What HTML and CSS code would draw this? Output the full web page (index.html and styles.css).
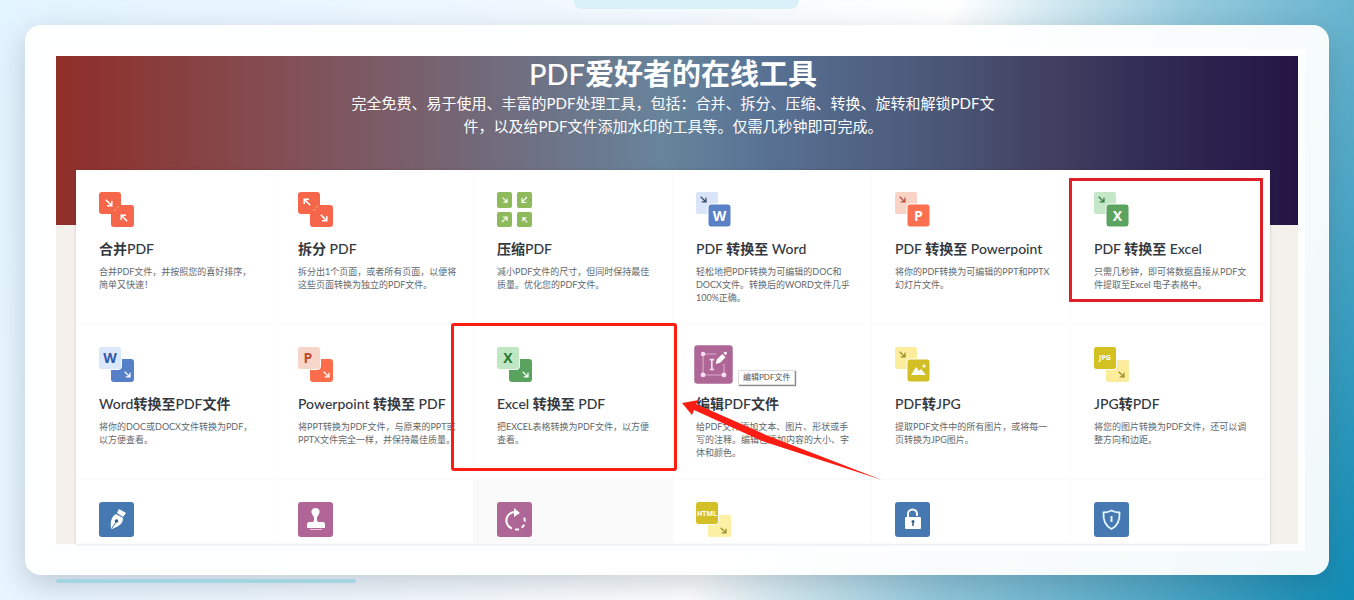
FILE: index.html
```html
<!DOCTYPE html>
<html lang="zh-CN">
<head>
  <meta charset="UTF-8" />
  <meta name="viewport" content="width=device-width, initial-scale=1.0" />
  <title>PDF爱好者的在线工具</title>
  <link rel="stylesheet" href="styles.css">
</head>
<body>
  <svg class="sprite" aria-hidden="true">
    <symbol id="arrow" viewBox="0 0 8 8"><path d="M.8.8l5.6 5.6M6.8 2v4.8H2" fill="none" stroke="currentColor" stroke-width="1.5"/></symbol>
    <symbol id="arrow-back" viewBox="0 0 8 8"><path d="M7.2 7.2L1.6 1.6M1.2 6V1.2H6" fill="none" stroke="currentColor" stroke-width="1.5"/></symbol>
  </svg>

  <div class="tab"></div>

  <main class="frame">
    <div class="shot">
      <header class="hero">
        <h1>PDF<b>爱好者的在线工具</b></h1>
        <p>完全免费、易于使用、丰富的PDF处理工具，包括：合并、拆分、压缩、转换、旋转和解锁PDF文<br>件，以及给PDF文件添加水印的工具等。仅需几秒钟即可完成。</p>
      </header>

      <div class="panel">
        <div class="tools">
          <a class="tool" href="#">
            <svg class="icon white" viewBox="0 0 35 35">
              <rect width="22" height="22" rx="3" fill="#f5664a"/><rect x="12" y="13" width="23" height="22" rx="3" fill="#f5664a"/>
              <path d="M15 19l5-5" stroke="#fbb36b" stroke-dasharray="3 1"/>
              <use href="#arrow" x="6" y="7" width="8" height="8"/><use href="#arrow-back" x="21" y="22" width="8" height="8"/>
            </svg>
            <h2><b>合并</b>PDF</h2>
            <p>合并PDF文件，并按照您的喜好排序，<br>简单又快速！</p>
          </a>
          <a class="tool" href="#">
            <svg class="icon white" viewBox="0 0 35 35">
              <rect width="22" height="22" rx="3" fill="#f5664a"/><rect x="12" y="13" width="23" height="22" rx="3" fill="#f5664a"/>
              <path d="M15 19l5-5" stroke="#fbb36b" stroke-dasharray="3 1"/>
              <use href="#arrow-back" x="5" y="6" width="8" height="8"/><use href="#arrow" x="22" y="22" width="8" height="8"/>
            </svg>
            <h2><b>拆分</b> PDF</h2>
            <p>拆分出1个页面，或者所有页面，以便将<br>这些页面转换为独立的PDF文件。</p>
          </a>
          <a class="tool" href="#">
            <svg class="icon white" viewBox="0 0 35 35">
              <g fill="#8fba5b"><rect width="15" height="16" rx="2"/><rect x="20" width="15" height="16" rx="2"/><rect y="20" width="15" height="15" rx="2"/><rect x="20" y="20" width="15" height="15" rx="2"/></g>
              <use href="#arrow" x="5" y="5" width="6" height="6"/><use href="#arrow-back" x="25" y="25" width="6" height="6"/>
              <path d="M30 5l-4.500 4.500M25 6v4.500h4.500M5 30l4.500-4.500M10 29v-4H6" fill="none" stroke="#fff" stroke-width="1.200"/>
            </svg>
            <h2><b>压缩</b>PDF</h2>
            <p>减小PDF文件的尺寸，但同时保持最佳<br>质量。优化您的PDF文件。</p>
          </a>
          <a class="tool" href="#">
            <svg class="icon navy" viewBox="0 0 35 35">
              <rect width="22" height="22" rx="2" fill="#d9e4f8"/><use href="#arrow" x="4" y="4" width="7" height="7"/>
              <rect x="12" y="12" width="23" height="23" rx="3" fill="#5a80c6" stroke="#fff"/><text x="23.500" y="29" fill="#fff">W</text>
            </svg>
            <h2>PDF <b>转换至</b> Word</h2>
            <p>轻松地把PDF转换为可编辑的DOC和<br>DOCX文件。转换后的WORD文件几乎<br>100%正确。</p>
          </a>
          <a class="tool" href="#">
            <svg class="icon rust" viewBox="0 0 35 35">
              <rect width="22" height="22" rx="2" fill="#f8d3c6"/><use href="#arrow" x="4" y="4" width="7" height="7"/>
              <rect x="12" y="12" width="23" height="23" rx="3" fill="#fb7150" stroke="#fff"/><text x="23.500" y="29" fill="#fff">P</text>
            </svg>
            <h2>PDF <b>转换至</b> Powerpoint</h2>
            <p>将你的PDF转换为可编辑的PPT和PPTX<br>幻灯片文件。</p>
          </a>
          <a class="tool" href="#">
            <svg class="icon green" viewBox="0 0 35 35">
              <rect width="22" height="22" rx="2" fill="#c3e7c7"/><use href="#arrow" x="4" y="4" width="7" height="7"/>
              <rect x="12" y="12" width="23" height="23" rx="3" fill="#5ba35f" stroke="#fff"/><text x="23.500" y="29" fill="#fff">X</text>
            </svg>
            <h2>PDF <b>转换至</b> Excel</h2>
            <p>只需几秒钟，即可将数据直接从PDF文<br>件提取至Excel 电子表格中。</p>
          </a>

          <a class="tool" href="#">
            <svg class="icon white" viewBox="0 0 35 35">
              <rect x="12" y="12" width="23" height="23" rx="3" fill="#5580c8"/><use href="#arrow" x="25" y="24" width="7" height="7"/>
              <rect x="-.5" y="-.5" width="23" height="23" rx="3" fill="#dbe7fb" stroke="#fff"/><text x="11" y="16" fill="#3158a5">W</text>
            </svg>
            <h2>Word<b>转换至</b>PDF<b>文件</b></h2>
            <p>将你的DOC或DOCX文件转换为PDF，<br>以方便查看。</p>
          </a>
          <a class="tool" href="#">
            <svg class="icon white" viewBox="0 0 35 35">
              <rect x="12" y="12" width="23" height="23" rx="3" fill="#fc6d4c"/><use href="#arrow" x="25" y="24" width="7" height="7"/>
              <rect x="-.5" y="-.5" width="23" height="23" rx="3" fill="#f6d6c9" stroke="#fff"/><text x="10" y="16" fill="#c04b30">P</text>
            </svg>
            <h2>Powerpoint <b>转换至</b> PDF</h2>
            <p>将PPT转换为PDF文件，与原来的PPT或<br>PPTX文件完全一样，并保持最佳质量。</p>
          </a>
          <a class="tool" href="#">
            <svg class="icon white" viewBox="0 0 35 35">
              <rect x="12" y="12" width="23" height="23" rx="3" fill="#59a35e"/><use href="#arrow" x="25" y="24" width="7" height="7"/>
              <rect x="-.5" y="-.5" width="23" height="23" rx="3" fill="#bfe7c4" stroke="#fff"/><text x="11" y="16" fill="#287b38">X</text>
            </svg>
            <h2>Excel <b>转换至</b> PDF</h2>
            <p>把EXCEL表格转换为PDF文件，以方便<br>查看。</p>
          </a>
          <a class="tool" href="#">
            <svg class="icon large" viewBox="0 0 35 35">
              <rect width="35" height="35" rx="3" fill="#ae6696"/>
              <path d="M8 9v18h19V17M8 8h12" fill="none" stroke="#dca7cb"/>
              <g fill="#fbdff3"><circle cx="8" cy="8" r="2"/><circle cx="8" cy="27" r="2.200"/><circle cx="27" cy="27" r="2.200"/></g>
              <path d="M14 13h4M14 22h4M16 13v9" stroke="#fbdff3" stroke-width="1.500"/>
              <path d="M19.500 17l1-4 5-5 3 3-5 5z M26.500 7l1.500-1c1.500-.5 2 1 1.500 2l-1 1z" fill="#fff"/>
            </svg>
            <h2><b>编辑</b>PDF<b>文件</b></h2>
            <p>给PDF文件添加文本、图片、形状或手<br>写的注释。编辑已添加内容的大小、字<br>体和颜色。</p>
          </a>
          <a class="tool" href="#">
            <svg class="icon olive" viewBox="0 0 35 35">
              <rect width="22" height="22" rx="2" fill="#fbed9c"/><use href="#arrow" x="4" y="4" width="7" height="7"/>
              <rect x="12" y="12" width="23" height="23" rx="3" fill="#d2bf25" stroke="#fff"/>
              <path d="M16 28l5-8 3 4 2-2 5 6z" fill="#fff"/><circle cx="29" cy="19" r="1.500" fill="#fff"/>
            </svg>
            <h2>PDF<b>转</b>JPG</h2>
            <p>提取PDF文件中的所有图片，或将每一<br>页转换为JPG图片。</p>
          </a>
          <a class="tool" href="#">
            <svg class="icon olive" viewBox="0 0 35 35">
              <rect x="12" y="13" width="23" height="22" rx="2" fill="#fbed9c"/><use href="#arrow" x="24" y="24" width="7" height="7"/>
              <rect x="-.5" y="-.5" width="23" height="23" rx="3" fill="#d3c021" stroke="#fff"/><text class="tiny" x="11" y="13" fill="#fff">JPG</text>
            </svg>
            <h2>JPG<b>转</b>PDF</h2>
            <p>将您的图片转换为PDF文件，还可以调<br>整方向和边距。</p>
          </a>

          <a class="tool short" href="#" aria-label="签名">
            <svg class="icon" viewBox="0 0 35 35">
              <rect width="35" height="35" rx="3" fill="#4678b2"/>
              <path d="M20 7l7 4-3 4-6-4z" fill="#fff"/><path d="M17 12l7 4c0 5-3 8-11 11l-1-1c-1-7 1-12 5-14z" fill="#fff"/>
              <path d="M13 26l4-6" stroke="#4678b2"/><circle cx="17.500" cy="19" r="1.800" fill="#355f86"/>
            </svg>
          </a>
          <a class="tool short" href="#" aria-label="水印">
            <svg class="icon" viewBox="0 0 35 35">
              <rect width="35" height="35" rx="3" fill="#b06596"/>
              <path d="M17.500 6c3 0 4.500 2 4 4.500S19 14 19 16s0 3 1 4h5c1 0 2 1 2 2v4H9v-4c0-1 1-2 2-2h4c1-1 1-2 1-4s-2-3-2.500-5.500S15 6 17.500 6z" fill="#fff"/>
              <path d="M12 27.500h12" stroke="#e7c8dd"/>
            </svg>
          </a>
          <a class="tool short active" href="#" aria-label="旋转">
            <svg class="icon" viewBox="0 0 35 35">
              <rect width="35" height="35" rx="3" fill="#ae6696"/>
              <path d="M18 10a8.500 8.500 0 0 0-3 16.500" fill="none" stroke="#fff" stroke-width="2"/>
              <path d="M18 27.500a8.500 8.500 0 0 0 8.500-13" fill="none" stroke="#fff" stroke-width="2" stroke-dasharray="4 3"/>
              <path d="M17 6l6 5-6 4z" fill="#fff"/>
            </svg>
          </a>
          <a class="tool short" href="#" aria-label="HTML转PDF">
            <svg class="icon olive" viewBox="0 0 35 35">
              <rect x="12" y="13" width="23" height="22" rx="2" fill="#fbf0a4"/><use href="#arrow" x="24" y="25" width="7" height="7"/>
              <rect x="-.5" y="-.5" width="23" height="23" rx="3" fill="#d3c029" stroke="#fff"/><text class="tiny" x="11" y="14" fill="#fff">HTML</text>
            </svg>
          </a>
          <a class="tool short" href="#" aria-label="解锁PDF">
            <svg class="icon" viewBox="0 0 35 35">
              <rect width="35" height="35" rx="3" fill="#4678b2"/>
              <path d="M13 16v-4a4.500 4.500 0 0 1 9 0v2" fill="none" stroke="#fff" stroke-width="2"/>
              <rect x="10" y="15" width="16" height="12" rx="1" fill="#fff"/><circle cx="18" cy="19.500" r="1.500" fill="#355f86"/><path d="M18 20v4" stroke="#355f86" stroke-width="1.500"/>
            </svg>
          </a>
          <a class="tool short" href="#" aria-label="保护PDF">
            <svg class="icon" viewBox="0 0 35 35">
              <rect width="35" height="35" rx="3" fill="#4678b2"/>
              <path d="M17.500 8.500c2.500 1.500 5 2 8 2 .5 7.500-1 13-8 16.500-7-3.500-8.500-9-8-16.500 3 0 5.500-.5 8-2z" fill="none" stroke="#e3f7ff" stroke-width="1.800"/>
              <path d="M17.500 14v6" stroke="#e3f7ff" stroke-width="2"/>
            </svg>
          </a>
        </div>

        <!-- marks drawn over the tool grid -->
        <span class="tooltip">编辑PDF文件</span>
        <div class="mark mark-top"></div>
        <div class="mark mark-middle"></div>
        <svg class="pointer" viewBox="0 0 201 82" aria-hidden="true">
          <path d="M0 3L17 0l-3 4 70 31 116 45L80 41 12 10l-2 5z" fill="#fb1d13"/>
        </svg>
      </div>
    </div>
  </main>

  <div class="underline"></div>
</body>
</html>
```
FILE: styles.css
```css
* {
  box-sizing: border-box;
}

body {
  position: relative;
  margin: 0;
  min-height: 100vh;
  padding: 25px 25px 0;
  overflow: hidden;
  font-family: Lato, "Noto Sans CJK SC", sans-serif;
  background: linear-gradient(114deg, #e2f4ff 0%, #eef7ff 30%, #fff 59%, #93c9dc 74%, #6ab5cf 83%, #108cb5 100%);
}

h1, h2, p {
  margin: 0;
}

.sprite {
  position: absolute;
  width: 0;
  height: 0;
}

.tab {
  position: absolute;
  top: 0;
  left: 42.4%;
  width: 16.6%;
  height: 9px;
  border-radius: 0 0 8px 8px;
  background: #d9f0f8;
}

.frame {
  padding: 24px;
  border-radius: 16px;
  background: rgba(255, 255, 255, 0.94);
  box-shadow: 0 10px 30px rgba(0, 30, 50, 0.2);
}

.shot {
  border: 7px solid #fff;
  border-right-color: #fcfeff;
  border-bottom-color: #fcfeff;
  background: #f4f0ec;
}

.hero {
  height: 169px;
  padding: 0 28px 0 20px;
  color: #fff;
  text-align: center;
  background: linear-gradient(90deg, #902e28 0%, #883e3d 9%, #825056 19%, #77606c 29%, #6f7083 38%, #67849b 49%, #587294 57%, #4a5575 72%, #403d5f 81%, #302a54 89%, #241444 100%);
}

.hero h1 {
  font-size: 29px;
  line-height: 36px;
  font-weight: 500;
}

.hero p {
  font-size: 15px;
  line-height: 23px;
}

/* pulled up over the lower edge of the hero */
.panel {
  position: relative;
  margin: -55px 28px 0 20px;
  background: #fff;
  box-shadow: 0 0 3px rgba(60, 40, 30, 0.2);
}

.tools {
  display: grid;
  grid-template-columns: repeat(6, 1fr);
}

.tool {
  min-width: 0;
  min-height: 155px;
  padding: 22px 0 6px 23px;
  border-right: 1px solid #fafafa;
  border-bottom: 1px solid #fafafa;
  color: #33383f;
  text-decoration: none;
  white-space: nowrap;
}

.tool.short {
  min-height: 64px;
}

.tool.active {
  background: #f9f9f9;
}

.tool h2 {
  margin: 12px 0 6px;
  font-size: 14px;
  line-height: 20px;
  font-weight: 500;
}

.tool p {
  color: #62676d;
  font-size: 9px;
  line-height: 13px;
}

.icon {
  display: block;
  width: 35px;
  height: 35px;
  overflow: visible;
}

.icon.large {
  transform: scale(1.1);
}

.icon text {
  font-family: "Open Sans", sans-serif;
  font-size: 14px;
  font-weight: 700;
  text-anchor: middle;
}

.icon text.tiny {
  font-size: 7px;
}

.white { color: #fff; }
.navy { color: #354669; }
.rust { color: #b64d40; }
.green { color: #397b43; }
.olive { color: #988c22; }

.tooltip {
  position: absolute;
  top: 200px;
  left: 662px;
  padding: 0 4px;
  border: 1px solid #ddd;
  background: #fff;
  box-shadow: 1px 1px 1px #888;
  color: #555;
  font-size: 8px;
  line-height: 13px;
}

.mark {
  position: absolute;
  border: 3px solid #fb1d13;
}

.mark-top {
  top: 8px;
  right: 7px;
  width: 194px;
  height: 124px;
  border-color: #df2026;
}

.mark-middle {
  top: 153px;
  left: 375px;
  width: 226px;
  height: 148px;
  border-radius: 3px;
}

.pointer {
  position: absolute;
  top: 230px;
  left: 606px;
  width: 201px;
  height: 82px;
}

.underline {
  position: relative;
  width: 23%;
  height: 4px;
  margin: 4px 0 0 31px;
  border-radius: 2px;
  background: #a2d4e3;
}
```
